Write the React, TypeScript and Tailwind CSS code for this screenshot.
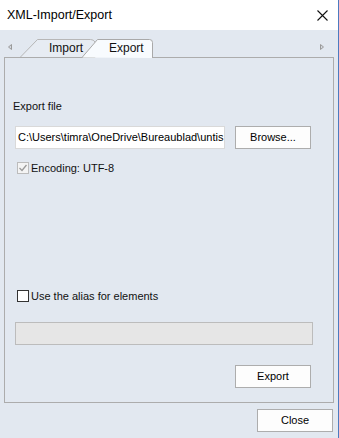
import React from "react";

const font = { fontFamily: '"Liberation Sans", Arial, sans-serif' };

function Button({ label, className = "" }: { label: string; className?: string }) {
  return (
    <div
      className={`h-[23px] w-[76px] border border-[#adadad] bg-[#fdfdfd] flex items-center justify-center text-[11px] leading-[13px] text-black ${className}`}
    >
      {label}
    </div>
  );
}

function CheckBox({ checked, disabled }: { checked?: boolean; disabled?: boolean }) {
  return (
    <div
      className={`w-[12px] h-[12px] border flex items-center justify-center ${
        disabled ? "border-[#bcbcbc] bg-[#f4f4f4]" : "border-[#333333] bg-white"
      }`}
    >
      {checked && (
        <svg width="10" height="10" viewBox="0 0 10 10">
          <path d="M1.5 5 L4 7.5 L8.5 2" fill="none" stroke={disabled ? "#9a9a9a" : "#222"} strokeWidth="1.3" />
        </svg>
      )}
    </div>
  );
}

function TabStrip() {
  return (
    <div className="relative h-[20px] w-[339px]">
      <svg width="339" height="20" viewBox="0 0 339 20" className="absolute left-0 top-0">
        {/* scroll arrows */}
        <polygon points="11.5,6.5 8.5,9 11.5,11.5" fill="#d4d9e0" stroke="#9a9a9a" />
        <polygon points="320.5,6.5 323.5,9 320.5,11.5" fill="#d4d9e0" stroke="#9a9a9a" />
        {/* Import tab */}
        <path d="M20 19.5 L37.5 1.5 L90.5 1.5 Q93.5 1.5 95 4 L95 19.5 Z" fill="#e7ecf3" stroke="#b7b7b7" />
        {/* Export tab */}
        <path d="M82 19.5 L97.5 1.5 L149.5 1.5 Q152.5 1.5 152.5 4.5 L152.5 20" fill="#f8fbfe" stroke="#a9a9a9" />
        {/* panel top line */}
        <line x1="4" y1="19.5" x2="82.5" y2="19.5" stroke="#acacac" />
        <line x1="152" y1="19.5" x2="334" y2="19.5" stroke="#acacac" />
      </svg>
      <span className="absolute left-[49px] top-[3px] text-[12px] leading-[14px] text-[#111]">Import</span>
      <span className="absolute left-[109px] top-[3px] text-[12px] leading-[14px] text-[#111]">Export</span>
    </div>
  );
}

export default function App() {
  return (
    <div
      className="w-[339px] h-[438px] bg-[#e2e8f0] border-r border-[#4c7bc0] flex flex-col overflow-hidden"
      style={font}
    >
      {/* title bar */}
      <div className="h-[30px] bg-white flex items-center justify-between pl-[7px] pr-[10px] shrink-0">
        <span className="text-[12.5px] leading-[15px] text-black">XML-Import/Export</span>
        <svg width="11" height="11" viewBox="0 0 11 11">
          <path d="M0.5 0.5 L10.5 10.5 M10.5 0.5 L0.5 10.5" stroke="#111" strokeWidth="1.1" />
        </svg>
      </div>

      <div className="h-[8px] shrink-0" />
      <TabStrip />

      {/* tab panel */}
      <div className="ml-[4px] w-[330px] h-[345px] border-x border-b border-[#acacac] flex flex-col pl-[8px] shrink-0">
        <div className="mt-[42px] text-[11px] leading-[13px] text-[#111]">Export file</div>

        <div className="mt-[13px] flex items-center">
          <div className="ml-[2px] w-[210px] h-[23px] border border-[#d9d9d9] bg-white flex items-center pl-[2px] overflow-hidden whitespace-nowrap text-[11px] leading-[13px] text-black">
            C:\Users\timra\OneDrive\Bureaublad\untis
          </div>
          <Button label="Browse..." className="ml-[10px]" />
        </div>

        <div className="mt-[12px] h-[14px] flex items-center pl-[4px] gap-[2px]">
          <CheckBox checked disabled />
          <span className="text-[11px] leading-[13px] text-[#111]">Encoding: UTF-8</span>
        </div>

        <div className="mt-[114px] h-[14px] flex items-center pl-[4px] gap-[2px]">
          <CheckBox />
          <span className="text-[11px] leading-[13px] text-[#111]">Use the alias for elements</span>
        </div>

        <div className="mt-[19px] ml-[2px] w-[298px] h-[23px] border border-[#bcbcbc] bg-[#e6e6e6]" />

        <div className="mt-[20px] flex">
          <Button label="Export" className="ml-[222px]" />
        </div>
      </div>

      <div className="mt-[6px] flex justify-end pr-[5px]">
        <Button label="Close" />
      </div>
    </div>
  );
}
